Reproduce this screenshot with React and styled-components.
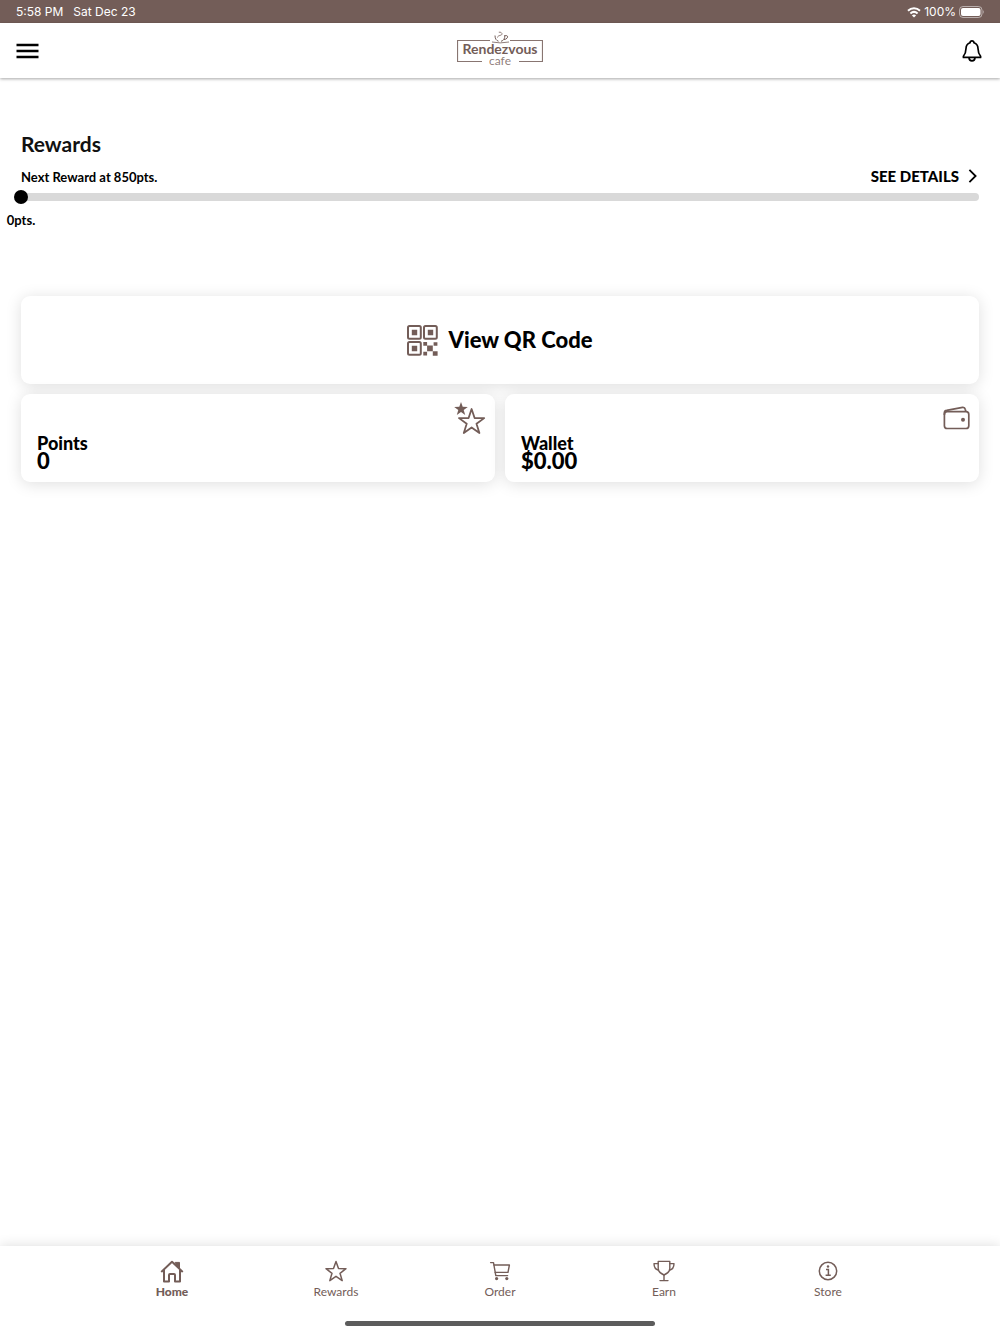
import React from 'react'
import styled, { createGlobalStyle } from 'styled-components'

const brown = '#735d58';

const GlobalStyle = createGlobalStyle`
    * {
        box-sizing: border-box;
    }
    body {
        margin: 0;
        background: #fff;
        color: #000;
        font-family: Lato, "Liberation Sans", sans-serif;
    }
    button, input {
        font: inherit;
        color: inherit;
        margin: 0;
        padding: 0;
        border: 0;
        background: none;
    }
    a {
        color: inherit;
        text-decoration: none;
    }
    svg {
        display: block;
        flex: none;
    }
`

const Page = styled.div`
    display: flex;
    flex-direction: column;
    min-height: 100vh;
`

const StatusBar = styled.div`
    display: flex;
    justify-content: space-between;
    align-items: center;
    height: 23px;
    padding: 0 15px 0 16px;
    background: ${brown};
    color: #fff;
    font-family: Inter, sans-serif;
    font-size: 12px;
`

const StatusGroup = styled.div`
    display: flex;
    align-items: center;
    gap: ${({ $gap }) => $gap}px;
`

const Header = styled.header`
    display: grid;
    grid-template-columns: 1fr auto 1fr;
    align-items: center;
    height: 55px;
    padding: 0 16px;
    box-shadow: 0 1px 3px rgba(0, 0, 0, 0.35);
`

const IconButton = styled.button`
    display: flex;
    justify-self: ${({ $side }) => $side};
    cursor: pointer;
`

const Main = styled.main`
    flex: 1;
    padding: 53px 21px 0;
`

const Title = styled.h1`
    margin: 0;
    font-size: 21px;
    line-height: 26px;
    font-weight: 700;
    color: #111;
`

const RewardRow = styled.div`
    display: flex;
    justify-content: space-between;
    align-items: baseline;
    margin-top: 10px;
    height: 21px;
`

const SmallText = styled.span`
    font-size: 13px;
    line-height: 16px;
    font-weight: 700;
    white-space: nowrap;
`

const DetailsLink = styled.a`
    display: flex;
    align-items: center;
    gap: 8px;
    font-size: 15px;
    line-height: 18px;
    font-weight: 900;
`

const Track = styled.div`
    display: flex;
    align-items: center;
    height: 8px;
    margin-top: 5px;
    border-radius: 4px;
    background: #d9d9d9;
`

const Slider = styled.input`
    appearance: none;
    flex: none;
    width: calc(100% + 14px);
    height: 14px;
    margin: 0 -7px;

    &::-webkit-slider-thumb {
        appearance: none;
        width: 14px;
        height: 14px;
        border-radius: 50%;
        background: #000;
    }
`

const TrackStart = styled.div`
    display: flex;
    justify-content: center;
    width: 0;
    margin-top: 11px;
`

const Cards = styled.section`
    display: grid;
    grid-template-columns: 1fr 1fr;
    gap: 10px;
    margin-top: 68px;
`

const Card = styled.button`
    display: flex;
    justify-content: space-between;
    align-items: flex-start;
    height: 88px;
    padding: 8px 9px 12px 16px;
    border-radius: 9px;
    background: #fff;
    box-shadow: 0 2px 16px rgba(0, 0, 0, 0.13);
    text-align: left;
    cursor: pointer;
`

const QrCard = styled(Card)`
    grid-column: 1 / -1;
    justify-content: center;
    align-items: center;
    gap: 10px;
    padding: 0;
    font-size: 22px;
    line-height: 26px;
    font-weight: 900;
`

const CardText = styled.span`
    display: flex;
    flex-direction: column;
    align-self: flex-end;
    line-height: 18px;
    font-weight: 900;
`

const CardLabel = styled.span`
    font-size: 18px;
`

const CardValue = styled.span`
    font-size: 22px;
`

const Footer = styled.footer`
    display: flex;
    flex-direction: column;
    align-items: center;
    justify-content: space-between;
    height: 88px;
    padding: 13px 0 8px;
    background: #fff;
    box-shadow: 0 0 12px rgba(0, 0, 0, 0.14);
`

const Tabs = styled.nav`
    display: flex;
    width: 82%;
`

const Tab = styled.a`
    flex: 1;
    display: flex;
    flex-direction: column;
    align-items: center;
    gap: 1px;
    color: ${brown};
    font-size: 12px;
    line-height: 16px;
    font-weight: ${({ $active }) => ($active ? 900 : 400)};
`

const HomeIndicator = styled.div`
    width: 31%;
    height: 5px;
    border-radius: 3px;
    background: #5c5c5c;
`

const WifiIcon = () => (
    <svg width="14" height="12" viewBox="0 0 14 12" fill="none" stroke="#fff" strokeWidth="2">
        <path d="M1 4.7 C4.4 1.5 9.6 1.5 13 4.7" />
        <path d="M3.4 7.4 C5.5 5.6 8.5 5.6 10.6 7.4" />
        <path d="M7 11.6 L4.9 9.4 Q7 7.8 9.1 9.4 Z" fill="#fff" stroke="none" />
    </svg>
)

const BatteryIcon = () => (
    <svg width="26" height="12" viewBox="0 0 26 12">
        <rect x="0.5" y="0.5" width="22.5" height="11" rx="3.5" fill="none" stroke="#fff" strokeOpacity="0.5" />
        <rect x="2" y="2" width="19.5" height="8" rx="2" fill="#fff" />
        <path d="M24.2 4 Q25.8 6 24.2 8 Z" fill="#fff" fillOpacity="0.55" />
    </svg>
)

const MenuIcon = () => (
    <svg width="23" height="16" viewBox="0 0 23 16" stroke="#000" strokeWidth="2.4">
        <path d="M0.5 2 H22.5 M0.5 8 H22.5 M0.5 14 H22.5" />
    </svg>
)

const BellIcon = () => (
    <svg width="24" height="24" viewBox="0 0 24 24" fill="none" stroke="#000" strokeWidth="1.7" strokeLinejoin="round">
        <path d="M10 3.8 Q10.2 1.8 12 1.8 Q13.8 1.8 14 3.8 Q17.9 5.2 18 9.5 C18.1 14 18.6 15 20.6 17.2 V18.4 H3.4 V17.2 C5.4 15 5.9 14 6 9.5 Q6.1 5.2 10 3.8 Z" />
        <path d="M9 18.6 C9.2 23 14.8 23 15 18.6" />
    </svg>
)

const Logo = () => (
    <svg width="86" height="42" viewBox="0 0 86 42" role="img" aria-label="Rendezvous cafe">
        <path d="M33 10.5 H0.5 V31.5 H25 M53 10.5 H85.5 V31.5 H62" fill="none" stroke={brown} strokeOpacity="0.85" strokeWidth="1.2" />
        <g fill="none" stroke={brown} strokeWidth="1">
            <path d="M38 5.5 C38 9 39.5 10.6 41.5 11.2 M47.8 5 C48 8.5 46.8 10.6 44 11.3" />
            <path d="M48 5.8 C52 4.6 51.2 9.2 47 9.6" />
            <path d="M35 12 Q43 13.8 52 12" strokeWidth="0.8" />
            <path d="M40.5 7.5 C40.5 5 45.6 5.8 45 3.6 Q44.2 1.6 41.8 2.2" strokeWidth="0.8" />
        </g>
        <text x="43" y="24" textAnchor="middle" fontFamily="Lato, sans-serif" fontSize="14" fontWeight="700" fill={brown}>Rendezvous</text>
        <text x="43" y="35" textAnchor="middle" fontFamily="Lato, sans-serif" fontSize="12" fill={brown} fillOpacity="0.8">cafe</text>
    </svg>
)

const ChevronIcon = () => (
    <svg width="12" height="16" viewBox="0 0 12 16" fill="none" stroke="#000" strokeWidth="1.8">
        <path d="M2.4 1.8 L8.6 8 L2.4 14.2" />
    </svg>
)

const QrIcon = () => (
    <svg width="31" height="31" viewBox="0 0 31 31" fill="none" stroke={brown} strokeWidth="2">
        <rect x="1" y="1" width="12.8" height="12.8" rx="1.5" />
        <rect x="17" y="1" width="12.8" height="12.8" rx="1.5" />
        <rect x="1" y="17" width="12.8" height="12.8" rx="1.5" />
        <g fill={brown} stroke="none">
            <path d="M4.8 4.8h5.4v5.4h-5.4z M20.8 4.8h5.4v5.4h-5.4z M4.8 20.8h5.4v5.4h-5.4z" />
            <path d="M16.3 17h3.8v3.8h-3.8z M20.1 20.6h5.7v5.6h-5.7z M26.6 17.2h3.8v3.6h-3.8z M16.3 26.8h3.8v3.8h-3.8z M25.8 26.2h4.8v4.6h-4.8z" />
        </g>
    </svg>
)

const StarsIcon = () => (
    <svg width="32" height="32" viewBox="0 0 32 32" fill="none" stroke={brown} strokeWidth="1.8" strokeLinejoin="round">
        <path d="M7 0 L8.7 4.8 L13.8 4.9 L9.7 8 L11.2 12.9 L7 10 L2.8 12.9 L4.3 8 L0.2 4.9 L5.3 4.8 Z" fill={brown} stroke="none" />
        <path d="M17.6 7 L20.6 16 L30.2 16.1 L22.5 21.8 L25.4 31 L17.6 25.5 L9.8 31 L12.7 21.8 L5 16.1 L14.6 16 Z" />
    </svg>
)

const WalletIcon = () => (
    <svg width="28" height="32" viewBox="0 0 28 32" fill="none" stroke={brown} strokeWidth="1.7" strokeLinejoin="round">
        <rect x="2.4" y="9.7" width="24.4" height="16.8" rx="2.8" />
        <path d="M2.4 13 V10.7 Q2.4 8.7 4.6 8.4 L20.6 5.4 Q22.8 5.2 23.2 7.2 L23.9 9.6" />
        <circle cx="21" cy="17.8" r="2" fill={brown} stroke="none" />
    </svg>
)

const HomeIcon = () => (
    <svg width="24" height="24" viewBox="0 0 24 24" fill="none" stroke={brown} strokeWidth="2" strokeLinejoin="round" strokeLinecap="round">
        <path d="M1.8 12.4 L12 2.8 L22.2 12.4" />
        <path d="M4 11 V22.4 H9 V16 Q9 15 10 15 H14 Q15 15 15 16 V22.4 H20 V11" />
        <path d="M15.5 3.4 H19.5 V9 L15.5 5.4 Z" fill={brown} strokeWidth="1" />
    </svg>
)

const StarIcon = () => (
    <svg width="24" height="24" viewBox="0 0 24 24" fill="none" stroke={brown} strokeWidth="1.5" strokeLinejoin="round">
        <path d="M12 2.4 L14.5 9.6 L22 9.7 L16 14.3 L18.2 21.6 L12 17.3 L5.8 21.6 L8 14.3 L2 9.7 L9.5 9.6 Z" />
    </svg>
)

const CartIcon = () => (
    <svg width="24" height="24" viewBox="0 0 24 24" fill="none" stroke={brown} strokeWidth="1.4" strokeLinejoin="round" strokeLinecap="round">
        <path d="M2.6 3.6 H5.5 L7.8 16.6 H19.6" />
        <path d="M6 6 H21.4 L20 13.4 H7.2" />
        <circle cx="8.6" cy="19.6" r="1.6" fill={brown} stroke="none" />
        <circle cx="18.8" cy="19.6" r="1.6" fill={brown} stroke="none" />
    </svg>
)

const TrophyIcon = () => (
    <svg width="24" height="24" viewBox="0 0 24 24" fill="none" stroke={brown} strokeWidth="1.4" strokeLinejoin="round" strokeLinecap="round">
        <path d="M6.2 2.4 H17.8 V9.4 C17.8 12.8 14.8 14.8 12 16 C9.2 14.8 6.2 12.8 6.2 9.4 Z" />
        <path d="M6.2 4.6 H2 C2 8.2 3.2 10.6 6.6 11.2 M17.8 4.6 H22 C22 8.2 20.8 10.6 17.4 11.2" />
        <path d="M12 16 V21.4 M8 21.6 H16" />
    </svg>
)

const InfoIcon = () => (
    <svg width="24" height="24" viewBox="0 0 24 24" fill="none" stroke={brown} strokeWidth="1.5">
        <circle cx="12" cy="12" r="8.7" />
        <path d="M10 10.5 H12.4 V16.2 M9.6 16.2 H14.8" />
        <circle cx="12" cy="7.5" r="1.2" fill={brown} stroke="none" />
    </svg>
)

const tabs = [
    { label: 'Home', Icon: HomeIcon, active: true },
    { label: 'Rewards', Icon: StarIcon },
    { label: 'Order', Icon: CartIcon },
    { label: 'Earn', Icon: TrophyIcon },
    { label: 'Store', Icon: InfoIcon },
]

const InfoCard = ({ label, value, icon }) => {
    return (
        <Card>
            <CardText>
                <CardLabel>{label}</CardLabel>
                <CardValue>{value}</CardValue>
            </CardText>
            {icon}
        </Card>
    )
}

const App = () => {
    return (
        <Page>
            <GlobalStyle />
            <StatusBar>
                <StatusGroup $gap={10}>
                    <span>5:58 PM</span>
                    <span>Sat Dec 23</span>
                </StatusGroup>
                <StatusGroup $gap={3}>
                    <WifiIcon />
                    <span>100%</span>
                    <BatteryIcon />
                </StatusGroup>
            </StatusBar>
            <Header>
                <IconButton $side="start" aria-label="Menu"><MenuIcon /></IconButton>
                <Logo />
                <IconButton $side="end" aria-label="Notifications"><BellIcon /></IconButton>
            </Header>
            <Main>
                <Title>Rewards</Title>
                <RewardRow>
                    <SmallText as="label" htmlFor="points">Next Reward at 850pts.</SmallText>
                    <DetailsLink href="#details">SEE DETAILS <ChevronIcon /></DetailsLink>
                </RewardRow>
                <Track>
                    <Slider id="points" type="range" min="0" max="850" defaultValue="0" />
                </Track>
                <TrackStart>
                    <SmallText>0pts.</SmallText>
                </TrackStart>
                <Cards>
                    <QrCard>
                        <QrIcon />
                        View QR Code
                    </QrCard>
                    <InfoCard label="Points" value="0" icon={<StarsIcon />} />
                    <InfoCard label="Wallet" value="$0.00" icon={<WalletIcon />} />
                </Cards>
            </Main>
            <Footer>
                <Tabs>
                    {tabs.map(({ label, Icon, active }) => (
                        <Tab key={label} href={`#${label.toLowerCase()}`} $active={active}>
                            <Icon />
                            {label}
                        </Tab>
                    ))}
                </Tabs>
                <HomeIndicator />
            </Footer>
        </Page>
    )
}

export default App
